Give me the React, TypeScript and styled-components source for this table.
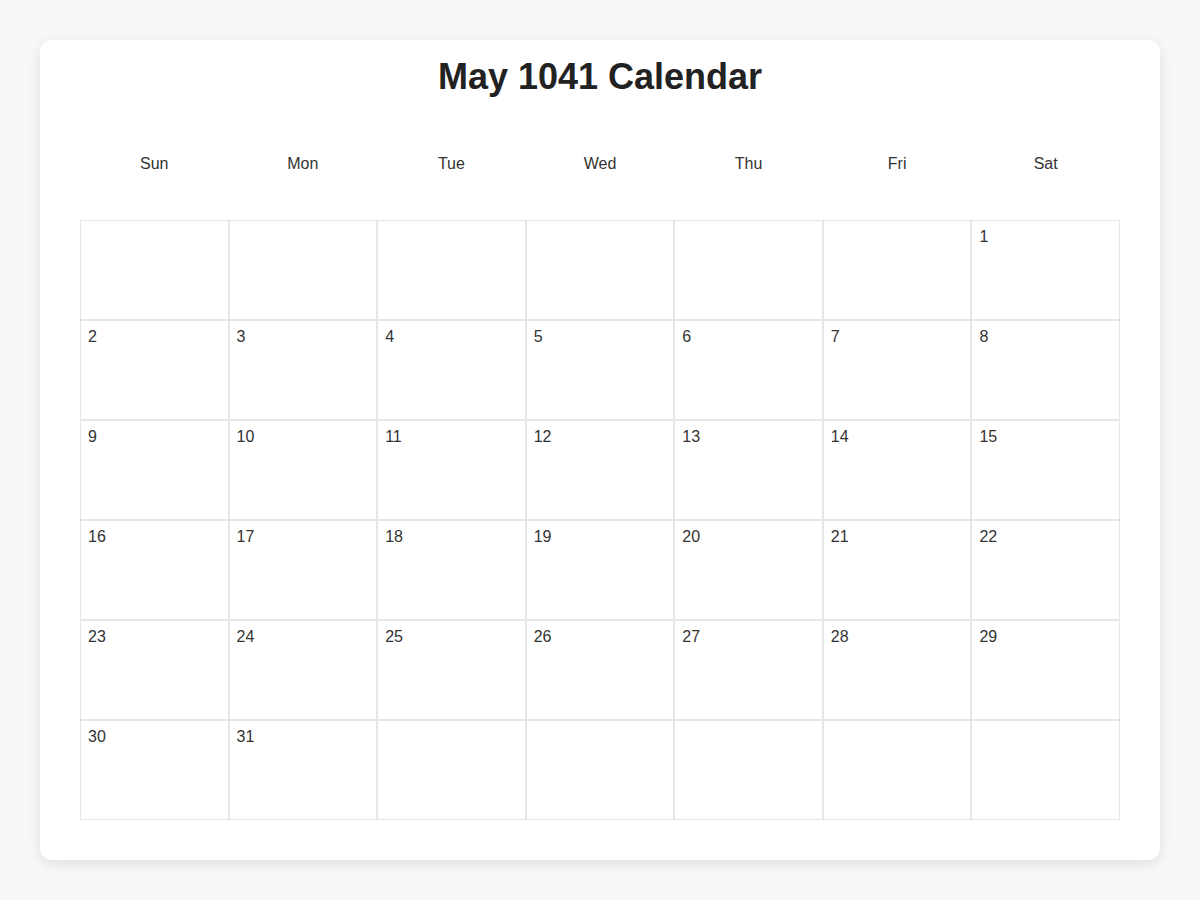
import styled, { createGlobalStyle } from "styled-components"

const GlobalStyle = createGlobalStyle`
  * {
    box-sizing: border-box;
  }
  body {
    margin: 0;
    background: #f7f8fa;
    font-family: "Liberation Sans", Arial, sans-serif;
    color: #333;
  }
`

const Page = styled.div`
  padding: 40px;
`

const Card = styled.div`
  background: #fff;
  border-radius: 12px;
  box-shadow: 0 4px 14px rgba(0, 0, 0, 0.1);
  padding: 16px 40px 40px;
`

const Title = styled.h1`
  margin: 0 0 40px;
  font-size: 36px;
  line-height: 42px;
  font-weight: 700;
  text-align: center;
  color: #222;
`

const Week = styled.div`
  display: grid;
  grid-template-columns: repeat(7, 1fr);
  margin-bottom: 32px;
`

const DayName = styled.div`
  height: 50px;
  padding-top: 1px;
  line-height: 50px;
  text-align: center;
  font-size: 16px;
  color: #333;
`

const Grid = styled.div`
  display: grid;
  grid-template-columns: repeat(7, 1fr);
`

const Cell = styled.div<{ $empty?: boolean }>`
  height: 100px;
  border: 1px solid #e6e6e6;
  padding: 7px 7px;
  font-size: 16px;
  color: #333;
`

const days = ["Sun", "Mon", "Tue", "Wed", "Thu", "Fri", "Sat"]

// May 1041 starts on a Saturday here
const offset = 6
const total = 31

const App = () => {
  const cells: (number | null)[] = []
  for (let i = 0; i < offset; i++) cells.push(null)
  for (let d = 1; d <= total; d++) cells.push(d)
  while (cells.length % 7 !== 0) cells.push(null)

  return (
    <>
      <GlobalStyle />
      <Page>
        <Card>
          <Title>May 1041 Calendar</Title>
          <Week>
            {days.map((d) => (
              <DayName key={d}>{d}</DayName>
            ))}
          </Week>
          <Grid>
            {cells.map((d, i) => (
              <Cell key={i} $empty={d === null}>
                {d ?? ""}
              </Cell>
            ))}
          </Grid>
        </Card>
      </Page>
    </>
  )
}

export default App
